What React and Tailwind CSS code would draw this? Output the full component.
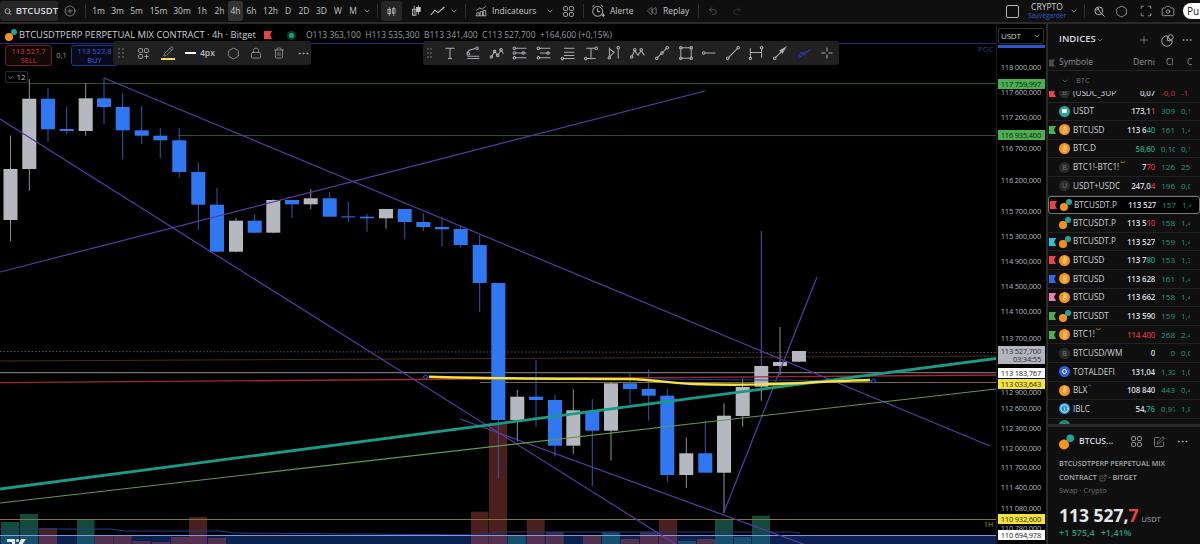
import React from 'react'
import { Search, CirclePlus, ChevronDown, Plus, Bitcoin, Info, SquarePen, ExternalLink, Ellipsis, Undo2, Redo2, Camera, Rewind, Lock, Trash2, Hexagon, Pencil } from 'lucide-react'

// [x, bodyTop, bodyBottom, wickTop, wickBottom, up]
const candles = [
  [10.5, 169, 220, 135.7, 241, 1], [29.3, 98.7, 169, 79, 190.7, 1], [48, 98.7, 129.3, 88, 141.7, 0],
  [66.7, 129, 131, 106.7, 134, 0], [85.7, 98.3, 131, 83, 135.7, 1], [104, 98.3, 107, 78, 124, 0],
  [122.7, 107, 130.3, 93.3, 159, 0], [141.7, 130.3, 135.7, 106, 144, 0], [160.3, 135.7, 140.3, 128, 158, 0],
  [179.3, 140.3, 172, 128, 177.3, 0], [198.3, 172, 204.7, 162.7, 230, 0], [217, 204.7, 251.7, 188, 252, 0],
  [236, 220.7, 251.7, 218, 252.3, 1], [254.7, 220.7, 232.7, 214.3, 233.3, 0], [273.3, 200, 232.7, 199.3, 233.3, 1],
  [292, 200, 204.3, 200, 218, 0], [310.7, 198.3, 204.3, 189, 209, 1], [329.7, 198.3, 216.7, 191.7, 216.7, 0],
  [348.3, 216.4, 217.2, 201.7, 222, 0], [367, 216.7, 218.3, 214, 231.7, 0], [386, 209, 218.3, 209, 228.7, 1],
  [404.7, 209, 222, 209, 239.3, 0], [423.3, 222, 227, 213.3, 231, 0], [442, 227, 229.3, 216.7, 246.7, 0],
  [460.7, 229, 245, 225, 247.3, 0], [479.7, 245, 283, 235, 312, 0], [498.3, 283, 420, 283, 478, 0],
  [517.3, 396.7, 420, 390, 441.7, 1], [536, 396.7, 400, 360, 427, 0], [555, 400, 445.7, 395, 456.7, 0],
  [573.3, 410.3, 445.7, 389.3, 454, 1], [592.3, 410.7, 430.7, 399, 486, 0], [611, 383.3, 430.7, 381.7, 460.7, 1],
  [630, 383.3, 389, 371.7, 404, 0], [648.7, 389, 395.7, 369.3, 420.7, 0], [667.3, 395.7, 475, 389, 481.7, 0],
  [686.3, 453.3, 475, 437.7, 488, 1], [705.3, 453.3, 472.7, 421, 472.7, 0], [724, 415.7, 472.7, 403.3, 513, 1],
  [742.7, 387, 416, 378.3, 426.7, 1], [761.3, 366, 386.7, 366, 400.7, 1], [780, 362, 366, 327, 375, 1],
  [799, 351, 361.7, 351, 362, 1],
]

// [x, width, top, kind] kind: r red, g green, p purple only, t teal only
const volumes = [
  [1, 18, 522, 'g'], [20, 18, 514, 'g'], [39, 18, 528, 'r'], [77, 17.5, 519, 'g'], [95, 18, 535, 'p'],
  [113.5, 18, 535, 'p'], [132.5, 18, 541, 'p'], [152, 18, 542, 'p'], [171, 18, 537, 'p'], [189, 18, 517, 'r'],
  [208, 18, 538, 'p'], [471, 17.5, 511.7, 'r'], [489, 18, 423, 'r'], [507.7, 18, 535, 't'], [526.7, 18, 520, 'r'],
  [545.7, 18, 532, 'p'], [583, 18, 535, 'p'], [602, 18, 532, 't'], [621, 18, 539, 'p'], [640, 18, 532, 'p'],
  [659, 18, 519.3, 'r'], [678, 18, 541, 't'], [697, 18, 539, 'p'], [715, 18, 520, 'g'], [734, 17, 537, 't'], [752, 18, 515.7, 'g'],
]

const volTop = { r: '#4a1f1e', g: '#124a3e', p: '#3f2a45', t: '#154a58' }
const volBottom = { r: '#563050', g: '#17506c', p: '#503250', t: '#17506c' }

function ChartDrawing() {
  return (
    <svg viewBox="0 24 996 520" className="absolute inset-0 w-[996px] h-[520px]">
      <rect x="0" y="536" width="996" height="8" fill="#0b2150" />
      {volumes.map(([x, w, top, k], i) => (
        <g key={i}>
          {top < 535 && <rect x={x} y={top} width={w} height={535 - top} fill={volTop[k]} />}
          <rect x={x} y={Math.max(top, 536)} width={w} height={544 - Math.max(top, 536)} fill={volBottom[k]} />
        </g>
      ))}
      <path d="M0 529H110L125 531H220L235 533L480 535" stroke="#233c8f" fill="none" />
      <path d="M480 535L500 532H790L800 533" stroke="#1c3a80" fill="none" />
      <line x1="0" y1="535.5" x2="996" y2="535.5" stroke="#7d95e6" />
      <line x1="0" y1="519.5" x2="996" y2="519.5" stroke="#85762f" />
      <line x1="0" y1="43.5" x2="996" y2="43.5" stroke="#1e2f80" />
      <line x1="30" y1="83.5" x2="996" y2="83.5" stroke="#1f5a28" />
      <line x1="178" y1="135.5" x2="996" y2="135.5" stroke="#1f5a28" />
      <line x1="0" y1="351.5" x2="996" y2="352.5" stroke="#55555a" strokeDasharray="1.5 2" />
      <line x1="0" y1="361" x2="996" y2="356" stroke="#4a2c18" />
      <line x1="0" y1="372.7" x2="996" y2="372.7" stroke="#8f8f96" />
      <line x1="480" y1="382.5" x2="996" y2="382.5" stroke="#7a6a30" />

      {candles.map(([x, t, b, wt, wb, up], i) => (
        <g key={i}>
          <line x1={x} y1={wt} x2={x} y2={wb} stroke={up ? '#8f9199' : '#2a5cb0'} />
          <rect x={x - 7} y={t} width="14" height={Math.max(b - t, 1)} fill={up ? '#b6b8c0' : '#2f78f2'} />
        </g>
      ))}
      <line x1="761.3" y1="231" x2="761.3" y2="366" stroke="#5550b0" />

      <line x1="0" y1="382.7" x2="996" y2="375" stroke="#a5262d" strokeWidth="1.3" />
      <g stroke="#5a3aa6" strokeWidth="1.2" fill="none">
        <line x1="104" y1="78" x2="990" y2="446" />
        <line x1="0" y1="119" x2="677" y2="545" />
        <line x1="0" y1="272" x2="705" y2="91" />
        <line x1="460" y1="419" x2="806" y2="545" />
        <line x1="724" y1="512" x2="817" y2="277" />
      </g>
      <line x1="0" y1="503" x2="996" y2="389" stroke="#5f9a4c" strokeWidth="1.1" />
      <line x1="0" y1="489" x2="996" y2="358.5" stroke="#1a9a88" strokeWidth="2.8" />
      <line x1="425" y1="377" x2="873" y2="381" stroke="#1c3fa0" />
      <path d="M429 376.7C500 379 590 378.5 630 379C650 379.5 670 383 693 384C720 385 745 384.8 767 384.3C790 384 830 381 870 380" stroke="#f4e43c" strokeWidth="2.4" fill="none" />
      <circle cx="425.5" cy="377" r="2" fill="#04102e" stroke="#2a55d0" />
      <circle cx="873.5" cy="381" r="2" fill="#04102e" stroke="#2a55d0" />
      {/* chart logo, cut by the window */}
      <path d="M7 539H15V545H12V542H7ZM21 539H26L22 545H18Z" fill="#e8e8e8" />
      <circle cx="17.5" cy="540.5" r="1.5" fill="#e8e8e8" />
    </svg>
  )
}

const priceTicks = [
  ['118 000,000', 68], ['117 600,000', 93], ['117 200,000', 118], ['116 700,000', 149], ['116 200,000', 181],
  ['115 700,000', 212], ['115 300,000', 237], ['114 900,000', 262], ['114 500,000', 287], ['114 100,000', 312],
  ['113 700,000', 339], ['112 900,000', 393], ['112 600,000', 409], ['112 300,000', 429], ['112 000,000', 449],
  ['111 700,000', 468], ['111 400,000', 488], ['111 080,000', 509], ['110 780,000', 529],
]

const priceTags = [
  ['117 759,997', 79, 'bg-[#4caf50] text-[#10240f]'],
  ['116 935,400', 129.5, 'bg-[#4caf50] text-[#10240f]'],
  ['113 183,767', 368, 'bg-white text-[#222]'],
  ['113 033,643', 379, 'bg-[#f5e23a] text-[#222]'],
  ['110 932,600', 514, 'bg-[#f5e23a] text-[#222]'],
  ['110 694,978', 530, 'bg-white text-[#222]'],
]

function PriceAxis() {
  return (
    <div className="relative w-[50px] shrink-0 bg-black border-l border-[#1c1c1c] text-[7.5px] tracking-[-0.2px] leading-none text-[#b2b5be] overflow-hidden">
      <div className="mt-[4px] ml-[1px] w-[46px] h-[16px] px-[2px] flex items-center justify-between border border-[#333] rounded-[2px] text-[8px] text-[#c8cad0]">
        <span>USDT</span>
        <ChevronDown className="w-[8px] h-[8px]" />
      </div>
      <div className="mt-[1px] ml-[1px] w-[47px] h-[3px] bg-[#2b55c8]" />
      {priceTicks.map(([label, y]) => (
        <span key={label} className="absolute right-[5px] whitespace-nowrap" style={{ top: y - 24 - 4 }}>{label}</span>
      ))}
      <div className="absolute left-[1px] top-[322px] w-[47px] h-[18px] bg-[#b2b5be] text-[#2c2c34] text-right pr-[4px] pt-[1px] leading-[8px]">
        113 527,700<br />03:34:55
      </div>
      {priceTags.map(([label, y, cls]) => (
        <span key={label} className={`absolute left-[1px] w-[47px] h-[10px] text-right pr-[4px] leading-[10px] ${cls}`} style={{ top: y - 24 }}>{label}</span>
      ))}
    </div>
  )
}

function Ic({ size = 14, view = 20, className = '', children }) {
  return (
    <svg viewBox={`0 0 ${view} ${view}`} width={size} height={size} fill="none" stroke="currentColor" strokeWidth="1.3" className={className}>
      {children}
    </svg>
  )
}

const GridIcon = ({ size = 13 }) => (
  <Ic size={size}>
    <rect x="2.5" y="2.5" width="6" height="6" rx="1.5" /><rect x="11.5" y="2.5" width="6" height="6" rx="1.5" />
    <rect x="2.5" y="11.5" width="6" height="6" rx="1.5" /><rect x="11.5" y="11.5" width="6" height="6" rx="1.5" />
  </Ic>
)

const Dots = ({ n = 6 }) => (
  <div className="grid grid-cols-2 gap-[2px]">
    {Array.from({ length: n }).map((_, i) => <span key={i} className="w-[2px] h-[2px] bg-[#4a4a4a]" />)}
  </div>
)

const Knob = ({ x, y }) => <circle cx={x} cy={y} r="1.6" />

const drawTools = [
  <><path d="M4 4H16M10 4V17M7.5 17H12.5" /></>,
  <><path d="M3 11C3 6 7 6 13 4.5" /><Knob x={15} y={4} /><Knob x={4} y={11} /><path d="M3 14H18M3 17H18" /></>,
  <><path d="M3 15L7 8L11 13L15 6L18 11" /><Knob x={3} y={15} /><Knob x={7} y={8} /><Knob x={11} y={13} /><Knob x={15} y={6} /></>,
  <><path d="M5 4H18M5 10H18M5 16H18" /><Knob x={3} y={4} /><Knob x={3} y={10} /><Knob x={3} y={16} /><Knob x={14} y={10} /></>,
  <><path d="M5 4H18M5 10H18M5 16H18" /><Knob x={3} y={4} /><Knob x={15} y={10} /><Knob x={3} y={16} /></>,
  <><path d="M5 4H18M5 9H18M5 13H18M5 17H18" /><Knob x={3} y={17} /></>,
  <><path d="M10 4V16M4 4H15M5 17H16" /><Knob x={16.5} y={4} /><Knob x={3.5} y={17} /></>,
  <><path d="M3 3V15L9 9L3 5M14 5V17" /><Knob x={3} y={16} /><Knob x={14} y={3.5} /></>,
  <><path d="M2 15L6 7L10 13L14 7L18 13" /><Knob x={6} y={6} /><Knob x={14} y={6} /><Knob x={2} y={15} /></>,
  <><path d="M4 16L16 4" /><Knob x={3.5} y={16.5} /><Knob x={10} y={10} /><Knob x={16.5} y={3.5} /></>,
  <><rect x="3.5" y="3.5" width="13" height="13" /><Knob x={3.5} y={3.5} /><Knob x={16.5} y={3.5} /><Knob x={3.5} y={16.5} /><Knob x={16.5} y={16.5} /></>,
  <><path d="M5 10H18" /><Knob x={3.5} y={10} /></>,
  <><path d="M4 16L16 4" /><Knob x={3.5} y={16.5} /><Knob x={16.5} y={3.5} /></>,
  <><path d="M3 4V16M17 4V16M3 9.5H17" /><Knob x={3} y={16.5} /><Knob x={17} y={3.5} /></>,
  <><path d="M4 16L16 4" /><Knob x={3.5} y={16.5} /><path d="M10 7L13 10L17 3Z" fill="currentColor" /></>,
  <><path d="M2 14C5 14 6 8 8 9C10 10 9 14 11 12L18 5M4 16L13 7" /></>,
  <><path d="M10 3V8M10 12V17M3 10H8M12 10H17" /></>,
]

const intervals = [['1m', 19], ['3m', 19], ['5m', 19], ['15m', 25], ['30m', 22], ['1h', 18], ['2h', 17], ['4h', 15, true], ['6h', 17], ['12h', 21], ['D', 14], ['2D', 18], ['3D', 17], ['W', 16], ['M', 14]]

function Divider({ className = '' }) {
  return <span className={`w-px h-[14px] bg-[#2e2e2e] shrink-0 ${className}`} />
}

function TopBar() {
  return (
    <div className="h-[22px] shrink-0 flex items-center bg-[#0f0f0f] text-[8.5px] font-medium text-[#c4c6cc]">
      <div className="w-[58px] h-[20px] flex items-center gap-[4px] pl-[4px] bg-[#262626] rounded-[3px] text-[9.5px] font-semibold text-[#d8dae0] shrink-0">
        <Search className="w-[9px] h-[9px]" />
        <span>BTCUSDT</span>
      </div>
      <CirclePlus className="ml-[6px] w-[12px] h-[12px] text-[#bdbdbd]" strokeWidth={1.2} />
      <Divider className="ml-[9px] mr-[3px]" />
      {intervals.map(([label, w, active]) => (
        <span key={label} className={`h-[20px] flex items-center justify-center rounded-[3px] shrink-0 ${active ? 'bg-[#333]' : ''}`} style={{ width: w }}>{label}</span>
      ))}
      <ChevronDown className="ml-[3px] w-[8px] h-[8px] shrink-0" />
      <Divider className="ml-[6px]" />
      <div className="ml-[3px] w-[21px] h-[20px] flex items-center justify-center bg-[#262626] rounded-[3px] shrink-0">
        <Ic size={11}><path d="M6 2V18M14 2V18" /><rect x="3.5" y="6" width="5" height="8" /><rect x="11.5" y="5" width="5" height="8" /></Ic>
      </div>
      <span className="ml-[8px] shrink-0"><Ic size={12}><path d="M7 1V18M14 1V16" /><rect x="4" y="7" width="6" height="10" /><rect x="11" y="4" width="6" height="7" fill="currentColor" /></Ic></span>
      <span className="ml-[8px] shrink-0"><Ic size={16}><path d="M1 15L6 9L10 12L18 5" /></Ic></span>
      <ChevronDown className="ml-[4px] w-[8px] h-[8px] shrink-0" />
      <Divider className="ml-[7px]" />
      <span className="ml-[9px] shrink-0"><Ic size={12}><path d="M1 18H19M3 18V13H7V18M8.5 18V11H12.5V18M14 18V9H18V18M2 9L8 5L12 7L18 2" /></Ic></span>
      <span className="ml-[5px] w-[43px] shrink-0">Indicateurs</span>
      <ChevronDown className="ml-[11px] w-[8px] h-[8px] shrink-0" />
      <span className="ml-[8px] shrink-0"><GridIcon size={13} /></span>
      <Divider className="ml-[8px]" />
      <span className="ml-[7px] shrink-0"><Ic size={14}><circle cx="9.5" cy="10.5" r="7" /><path d="M9.5 6V11H13M2 4L5 1.5M17 4L14 1.5M15 16H20M17.5 13.5V18.5" /></Ic></span>
      <span className="ml-[5px] w-[25px] shrink-0">Alerte</span>
      <Rewind className="ml-[12px] w-[10px] h-[10px] shrink-0" strokeWidth={1.2} />
      <span className="ml-[6px] w-[27px] shrink-0">Replay</span>
      <Divider className="ml-[8px]" />
      <Undo2 className="ml-[9px] w-[10px] h-[10px] text-[#7a7a7a] shrink-0" strokeWidth={1.3} />
      <Redo2 className="ml-[14px] w-[10px] h-[10px] text-[#444] shrink-0" strokeWidth={1.3} />
      <div className="ml-auto flex items-center">
        <span className="w-[13px] h-[13px] border border-[#b5b5b5] rounded-[2px]" />
        <div className="ml-[10px] w-[36px] flex flex-col items-center leading-[9px]">
          <span className="text-[#d0d2d8]">CRYPTO</span>
          <span className="text-[6.5px] font-normal text-[#2f5fd0] whitespace-nowrap">Sauvegarder</span>
        </div>
        <ChevronDown className="ml-[5px] w-[8px] h-[8px]" />
        <Divider className="ml-[6px]" />
        <span className="ml-[8px]"><Ic size={13}><circle cx="9" cy="9" r="6" /><path d="M13.5 13.5L18 18M7 4L12 13M4 9L9 5" /></Ic></span>
        <Hexagon className="ml-[9px] w-[13px] h-[13px]" strokeWidth={1.2} />
        <span className="ml-[12px]"><Ic size={12}><path d="M2 6V3C2 2.5 2.5 2 3 2H6M14 2H17C17.5 2 18 2.5 18 3V6M18 14V17C18 17.5 17.5 18 17 18H14M6 18H3C2.5 18 2 17.5 2 17V14" /></Ic></span>
        <Camera className="ml-[9px] w-[14px] h-[14px]" strokeWidth={1.2} />
        <div className="ml-[8px] w-[17px] h-[16px] bg-white rounded-l-[8px] pl-[4px] text-[#222] text-[10px] font-normal leading-[16px] overflow-hidden">Pu</div>
      </div>
    </div>
  )
}

function Legend() {
  return (
    <div className="absolute left-0 top-[5px] h-[12px] flex items-center leading-none whitespace-nowrap">
      <span className="ml-[5px]"><DualIcon /></span>
      <span className="ml-[2px] w-[239px] text-[9.4px] text-[#cfd1d8]">BTCUSDTPERP PERPETUAL MIX CONTRACT · 4h · Bitget</span>
      <svg viewBox="0 0 8 8" width="8" height="8" className="ml-[6px]"><path d="M0 0H8L6 4L8 8H0Z" fill="#e8424b" /></svg>
      <span className="ml-[15px] w-[9px] h-[9px] rounded-full bg-[#0f3d2e] flex items-center justify-center"><span className="w-[5px] h-[5px] rounded-full bg-[#12a37c]" /></span>
      <span className="ml-[10px] text-[8.5px] text-[#9a9ca3]">O113 363,100&nbsp; H113 535,300&nbsp; B113 341,400&nbsp; C113 527,700&nbsp; +164,600 (+0,15%)</span>
    </div>
  )
}

function OrderButtons() {
  return (
    <div className="absolute left-[5px] top-[21px] flex items-center text-[7.5px] leading-[9px] text-center">
      <div className="w-[47px] h-[21px] pt-[1px] border border-[#6b2427] rounded-[3px] bg-[#120808] text-[#d8323c]">113 527,7<br />SELL</div>
      <span className="w-[19px] text-[#9a9ca3]">0,1</span>
      <div className="w-[47px] h-[21px] pt-[1px] border border-[#1c3a8a] rounded-[3px] bg-[#08091a] text-[#2f68e0]">113 527,8<br />BUY</div>
    </div>
  )
}

function StyleToolbar() {
  return (
    <div className="absolute left-[113px] top-[17px] w-[198px] h-[24px] flex items-center bg-[#202020] rounded-[3px] text-[#b8bac0]">
      <span className="ml-[5px]"><Dots /></span>
      <span className="ml-[13px]"><Ic size={13}><rect x="2.5" y="2.5" width="6" height="6" rx="1.5" /><rect x="11.5" y="2.5" width="6" height="6" rx="1.5" /><rect x="2.5" y="11.5" width="6" height="6" rx="1.5" /><path d="M11.5 14.5H18M14.75 11.5V18" /></Ic></span>
      <span className="ml-[11px] w-[14px] flex flex-col items-center">
        <Pencil className="w-[11px] h-[11px]" strokeWidth={1.3} />
        <span className="mt-[1px] w-[14px] h-[2px] bg-[#f5e23a]" />
      </span>
      <span className="ml-[10px] w-[11px] h-[2px] bg-white" />
      <span className="ml-[4px] text-[8.5px] font-semibold">4px</span>
      <Hexagon className="ml-[12px] w-[13px] h-[13px]" strokeWidth={1.2} />
      <Lock className="ml-[10px] w-[12px] h-[12px]" strokeWidth={1.2} />
      <Trash2 className="ml-[11px] w-[12px] h-[12px]" strokeWidth={1.2} />
      <Ellipsis className="ml-[12px] w-[13px] h-[13px]" strokeWidth={1.4} />
    </div>
  )
}

function DrawToolbar() {
  return (
    <div className="absolute left-[423px] top-[17px] w-[416px] h-[24px] flex items-center bg-[#202020] rounded-[3px] text-[#a8aab0]">
      <span className="ml-[4px] mr-[7.5px]"><Dots /></span>
      {drawTools.map((d, i) => (
        <span key={i} className="w-[23.6px] flex justify-center shrink-0">
          <Ic size={16} className={i === 15 ? 'text-[#2b3f9e]' : ''}>{d}</Ic>
        </span>
      ))}
    </div>
  )
}

function Chart() {
  return (
    <div className="relative w-[996px] shrink-0 bg-black overflow-hidden">
      <ChartDrawing />
      <Legend />
      <OrderButtons />
      <div className="absolute left-[5px] top-[47px] w-[23px] h-[12px] flex items-center justify-center gap-[2px] border border-[#2a2a2a] rounded-[2px] bg-black text-[8px] text-[#b8bac0]">
        <ChevronDown className="w-[7px] h-[7px]" />12
      </div>
      <StyleToolbar />
      <DrawToolbar />
      <span className="absolute left-[978px] top-[20px] text-[8px] leading-[10px] text-[#27408f]">POC</span>
      <span className="absolute left-[984px] top-[496px] text-[7px] leading-[10px] text-[#a8973c]">1H</span>
    </div>
  )
}

function DualIcon() {
  return (
    <span className="relative block w-[12px] h-[12px]">
      <span className="absolute left-0 bottom-0 w-[8px] h-[8px] rounded-full bg-[#f7931a]" />
      <span className="absolute right-0 top-0 w-[6px] h-[6px] rounded-full bg-[#1fa59a]" />
    </span>
  )
}

function BtcIcon() {
  return (
    <span className="w-[11px] h-[11px] rounded-full bg-[#f7931a] flex items-center justify-center">
      <Bitcoin className="w-[8px] h-[8px] text-[#fde6c4]" strokeWidth={2} />
    </span>
  )
}

function SymbolIcon({ kind }) {
  if (kind === 'btc') return <BtcIcon />
  if (kind === 'dual') return <DualIcon />
  if (kind === 'usdt') return <span className="w-[11px] h-[11px] rounded-full bg-[#26a69a] flex items-center justify-center"><span className="w-[5px] h-[4px] bg-white rounded-[1px]" /></span>
  if (kind === 'defi') return <span className="w-[11px] h-[11px] rounded-full bg-[#2f5fe8] flex items-center justify-center"><span className="w-[5px] h-[5px] rounded-full border border-white" /></span>
  if (kind === 'info') return <span className="w-[11px] h-[11px] rounded-full bg-[#2396d8] flex items-center justify-center"><Info className="w-[9px] h-[9px] text-white" strokeWidth={2} /></span>
  return <span className="w-[11px] h-[11px] rounded-full bg-[#2a2a2a] text-[7px] leading-[11px] text-center text-[#777]">{kind}</span>
}

// flag, icon, name, sup, supColor, last (white part), last (coloured part), colour of it, change, pct
const rows = [
  ['#e8424b', 'B', '(USDC_3UP', '', '', '0,07', '', '', '-0,0', '-1', true],
  ['', 'usdt', 'USDT', '', '', '173,1', '1', 'text-[#d8323c]', '309', '0,1'],
  ['#4caf50', 'btc', 'BTCUSD', '', '', '113 6', '40', 'text-[#1f9e80]', '161', '1,4'],
  ['', 'btc', 'BTC.D', '', '', '', '58,60', 'text-[#1f9e80]', '0,10', '0,1'],
  ['', 'B', 'BTC1!-BTC1!', 'D', 'text-[#c98a1e]', '7', '70', 'text-[#d8323c]', '126', '25'],
  ['', 'U', 'USDT+USDC', '', '', '247,0', '4', 'text-[#d8323c]', '196', '0,0'],
  ['#e8424b', 'dual', 'BTCUSDT.P', '', '', '113 527', '', '', '157', '1,4', false, true],
  ['', 'dual', 'BTCUSDT.P', '', '', '113 5', '10', 'text-[#d8323c]', '158', '1,4'],
  ['#26c6da', 'dual', 'BTCUSDT.P', '', '', '113 527', '', '', '159', '1,4'],
  ['#e8424b', 'btc', 'BTCUSD', '', '', '113 7', '80', 'text-[#1f9e80]', '153', '1,3'],
  ['#2f6bf0', 'btc', 'BTCUSD', '', '', '113 628', '', '', '161', '1,4'],
  ['#ec7fae', 'btc', 'BTCUSD', '', '', '113 662', '', '', '158', '1,4'],
  ['#4caf50', 'dual', 'BTCUSDT', '', '', '113 590', '', '', '159', '1,4'],
  ['#4caf50', 'btc', 'BTC1!', 'D', 'text-[#c98a1e]', '', '114 400', 'text-[#d8323c]', '268', '2,4'],
  ['', 'B', 'BTCUSD/WM', '', '', '0', '', '', '0', '0,0'],
  ['', 'defi', 'TOTALDEFI', '', '', '131,04', '', '', '1,32', '1,0'],
  ['', 'btc', 'BLX', 'E', 'text-[#6a4fb0]', '108 840', '', '', '443', '0,4'],
  ['', 'info', 'IBLC', '•', 'text-[#2f6bf0]', '54,', '76', 'text-[#1f9e80]', '0,97', '1,8'],
]

function Row({ r }) {
  const [flag, icon, name, sup, supColor, last, lastHi, hiColor, ch, pct, clipped, selected] = r
  return (
    <div className={`h-[18.6px] shrink-0 flex items-center box-border ${selected ? 'border border-[#777] rounded-[3px] bg-black' : 'border-b border-[#222]'}`}>
      <span className="w-[9px] ml-px shrink-0">
        {flag && <svg viewBox="0 0 7 8" width="7" height="8" className="block"><path d="M0 0H7L5 4L7 8H0Z" fill={flag} /></svg>}
      </span>
      <span className="w-[13px] flex justify-center shrink-0"><SymbolIcon kind={icon} /></span>
      <span className="ml-[2px] w-[54px] flex whitespace-nowrap overflow-hidden text-[8.2px] font-medium text-[#cfd1d8]">
        <span>{name}</span>
        {sup && <sup className={`ml-[1px] top-0 text-[7px] ${supColor}`}>{sup}</sup>}
      </span>
      <span className="w-[28px] text-right whitespace-nowrap overflow-hidden text-[8px] tracking-[-0.2px] font-semibold text-[#d8dae0]">
        {last}<span className={hiColor}>{lastHi}</span>
      </span>
      <span className={`ml-[6px] w-[14px] whitespace-nowrap overflow-hidden text-right text-[8px] ${clipped ? 'text-[#d8323c]' : 'text-[#1f9e80]'}`}>{ch}</span>
      <span className={`ml-[6px] w-[9px] whitespace-nowrap overflow-hidden text-[8px] ${clipped ? 'text-[#d8323c]' : 'text-[#1f9e80]'}`}>{pct}</span>
    </div>
  )
}

function Panel() {
  return (
    <div className="flex-1 flex flex-col border-l-2 border-[#2a2a2a] bg-[#0f0f0f] text-[8.5px] overflow-hidden">
      <div className="h-[31px] shrink-0 flex items-center text-[#d8dae0]">
        <span className="ml-[11px] w-[34px] font-semibold text-[9.5px]">INDICES</span>
        <ChevronDown className="ml-[3px] w-[8px] h-[8px] text-[#999]" />
        <Plus className="ml-[34px] w-[12px] h-[12px] text-[#aaa]" strokeWidth={1.2} />
        <span className="ml-[11px] text-[#bbb]"><Ic size={14}><path d="M9 4A7.5 7.5 0 1 0 16 11H9Z" /><circle cx="14" cy="6" r="3.5" /></Ic></span>
        <Ellipsis className="ml-[6px] w-[12px] h-[12px] text-[#aaa]" strokeWidth={1.4} />
      </div>
      <div className="h-[16px] shrink-0 flex items-center border-b border-[#222] text-[#8d8f96]">
        <svg viewBox="0 0 7 8" width="6" height="8" className="ml-px"><path d="M0 0H7L5 4L7 8H0Z" fill="#4a4a4a" /></svg>
        <span className="ml-[4px] w-[32px]">Symbole</span>
        <span className="ml-[42px] w-[21px]">Derni</span>
        <span className="ml-[12px] w-[7px]">Cl</span>
        <span className="ml-[14px]">C</span>
      </div>
      <div className="h-[20px] shrink-0 flex items-center text-[7.5px] text-[#6a6c72]">
        <ChevronDown className="ml-[13px] w-[8px] h-[8px]" />
        <span className="ml-[7px]">BTC</span>
      </div>
      <div className="h-[11.6px] shrink-0 flex items-end overflow-hidden"><div className="w-full"><Row r={rows[0]} /></div></div>
      {rows.slice(1).map((r, i) => <Row key={i} r={r} />)}
      <div className="h-[5px] shrink-0 overflow-hidden pl-[11px]"><span className="block mt-[1px] w-[11px] h-[11px] rounded-full bg-[#1f8f7a]" /></div>
      <div className="h-[3px] shrink-0 bg-[#2a2a2a]" />
      <Detail />
    </div>
  )
}

function Detail() {
  return (
    <div className="flex-1 pl-[11px]">
      <div className="mt-[8px] flex items-center h-[14px] text-[#d8dae0]">
        <span className="scale-125 origin-left"><DualIcon /></span>
        <span className="ml-[8px] w-[36px] font-semibold text-[8.6px]">BTCUS...</span>
        <span className="ml-[15px] text-[#bbb]"><GridIcon size={13} /></span>
        <SquarePen className="ml-[10px] w-[12px] h-[12px] text-[#bbb]" strokeWidth={1.2} />
        <Ellipsis className="ml-[11px] w-[13px] h-[13px] text-[#bbb]" strokeWidth={1.4} />
      </div>
      <div className="mt-[7px] text-[7.2px] leading-[14px] font-semibold text-[#a8aab0] whitespace-nowrap">
        BTCUSDTPERP PERPETUAL MIX<br />
        CONTRACT <ExternalLink className="inline w-[8px] h-[8px] text-[#777]" /> · BITGET
      </div>
      <div className="text-[7.5px] leading-[12px] text-[#6a6c72]">Swap · Crypto</div>
      <div className="mt-[10px] flex items-baseline leading-[18px] whitespace-nowrap">
        <span className="text-[17.5px] font-bold text-[#e6e7ea]">113 527,<span className="text-[#e8424b]">7</span></span>
        <span className="ml-[3px] text-[7.5px] text-[#a8aab0]">USDT</span>
      </div>
      <div className="mt-[-1px] flex gap-[6px] text-[9px] font-semibold leading-[12px] text-[#1f9e80] whitespace-nowrap">
        <span>+1 575,4</span><span>+1,41%</span>
      </div>
    </div>
  )
}

export default function App() {
  return (
    <div className="w-[1200px] h-[544px] flex flex-col bg-black overflow-hidden" style={{ fontFamily: '"Open Sans", "Noto Sans", sans-serif' }}>
      <TopBar />
      <div className="h-[2px] shrink-0 bg-[#2a2a2a]" />
      <div className="flex flex-1 min-h-0">
        <Chart />
        <PriceAxis />
        <Panel />
      </div>
    </div>
  )
}
